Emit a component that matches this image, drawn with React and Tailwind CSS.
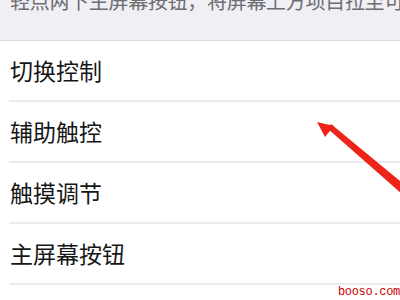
const font = { fontFamily: '"Noto Sans CJK SC", "Noto Sans", sans-serif' }

const items = ['切换控制', '辅助触控', '触摸调节', '主屏幕按钮']

export default function App() {
  return (
    <div className="relative w-[400px] h-[300px] overflow-hidden bg-white" style={font}>
      <div className="h-[41px] bg-[#efeff4] border-b border-[#dcdce0] overflow-hidden">
        <p className="mt-[-9px] pl-[10px] text-[20px] leading-[20px] text-[#6d6d72] whitespace-nowrap tracking-[-0.3px]">
          轻点两下主屏幕按钮，将屏幕上方项目拉至可及
        </p>
      </div>
      <ul>
        {items.map((item, i) => (
          <li key={i} className="pl-[9px]">
            <div className="h-[61px] flex items-center border-b-2 border-[#ebebed] text-[23px] text-[#161616] pl-[1px]">
              {item}
            </div>
          </li>
        ))}
      </ul>

      {/* red annotation arrow */}
      <svg className="absolute left-0 top-0" width="400" height="300" viewBox="0 0 400 300">
        <polygon points="327,128 331,124 406,186 402,194" fill="#ee2418" />
        <polygon points="317,122 334,126 325,137" fill="#ee2418" />
      </svg>

      <span
        className="absolute right-[0px] bottom-[2px] text-[12px] leading-[12px] text-[#cc0000] tracking-[-0.3px]"
        style={{ fontFamily: '"Liberation Mono", monospace' }}
      >
        booso.com
      </span>
    </div>
  )
}
